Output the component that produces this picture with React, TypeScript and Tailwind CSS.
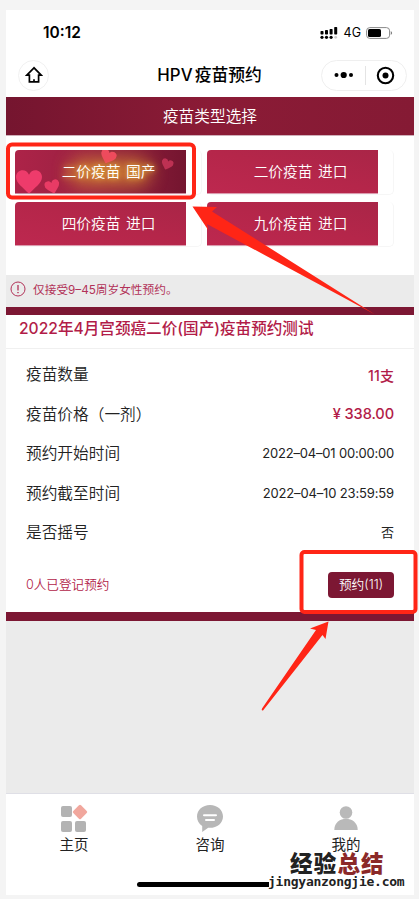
const cjk = "font-['Inter','Noto_Sans_CJK_SC',sans-serif]";

function StatusBar() {
  return (
    <div className="flex h-[45px] items-center justify-between pl-[37px] pr-[21px]">
      <span className="text-[15.5px] font-semibold leading-none tracking-[0px] text-black">10:12</span>
      <div className="flex items-center">
        <svg width="18" height="12" viewBox="0 0 18 12" fill="black">
          <rect x="0.5" y="4" width="3" height="3.5" rx="0.7" />
          <rect x="5" y="3" width="3" height="4.5" rx="0.7" />
          <rect x="9.6" y="2" width="3" height="5.5" rx="0.7" />
          <rect x="14.2" y="0" width="3" height="7.5" rx="0.7" />
          <circle cx="2" cy="10.3" r="1.6" />
          <circle cx="6.5" cy="10.3" r="1.6" />
          <circle cx="11.1" cy="10.3" r="1.6" />
          <circle cx="15.7" cy="10.3" r="1.4" fill="#ccc" />
        </svg>
        <span className="ml-[6px] mr-[5px] pt-[2px] text-[12.5px] leading-none tracking-[0px]">4G</span>
        <svg width="27" height="12" viewBox="0 0 27 12">
          <rect x="0.6" y="0.6" width="23" height="10.8" rx="3.2" fill="none" stroke="#888" />
          <rect x="2" y="2" width="13" height="8" rx="1.6" />
          <path d="M24.8 4v4q1.3-.8 1.3-2t-1.3-2" fill="#777" />
        </svg>
      </div>
    </div>
  );
}

function NavBar() {
  return (
    <div className="flex h-[42px] items-center justify-between pl-[12px] pr-[7px] pb-[2px]">
      <div className="flex h-[31px] w-[31px] items-center justify-center rounded-full border border-[#f1f1f1]">
        <svg width="18" height="18" viewBox="0 0 18 18" fill="none" stroke="black" strokeWidth="1.7" strokeLinejoin="miter">
          <path d="M9 1.8 1.8 9.2h2.6v6.6h9.2V9.2h2.6z" />
          <path d="M9 13.2v2.6" />
        </svg>
      </div>
      <h1 className="ml-[49px] whitespace-nowrap pt-[1px] text-[16.8px] font-medium leading-none text-black">
        <span className="mr-[2px] tracking-[0.1px]">HPV</span>疫苗预约
      </h1>
      <div className="flex h-[31px] w-[86px] items-center rounded-full border border-[#efefef]">
        <svg className="w-[43px]" height="10" viewBox="0 0 43 10">
          <circle cx="14.5" cy="5" r="2" />
          <circle cx="21.7" cy="5" r="3.1" />
          <circle cx="29" cy="5" r="2" />
        </svg>
        <div className="h-[19px] w-px bg-[#e4e4e4]" />
        <svg className="ml-[10px]" width="19" height="19" viewBox="0 0 19 19">
          <circle cx="9.5" cy="9.5" r="7.7" fill="none" stroke="black" strokeWidth="2.1" />
          <circle cx="9.5" cy="9.5" r="3" />
        </svg>
      </div>
    </div>
  );
}

function Heart({ className }: { className: string }) {
  return (
    <svg className={className} viewBox="0 0 24 22" preserveAspectRatio="none">
      <path d="M12 22C8 17 0 12.5 0 6.4 0 0 9-2.5 12 4.4 15-2.5 24 0 24 6.4 24 12.5 16 17 12 22z" fill="currentColor" />
    </svg>
  );
}

function VaccineButton({ name, origin, selected = false }: { name: string; origin: string; selected?: boolean }) {
  return (
    <div className="h-[45px] rounded-[5px] border-b border-r border-[#f6f6f6]">
      <button
        className={
          selected
            ? "relative block h-[44px] w-[171px] overflow-hidden rounded-tl-[4px] border-b border-[#c88ca0] bg-linear-to-r from-[#ad2348] via-[#982141] to-[#74152f] text-white"
            : "block h-[44px] w-[171px] rounded-tl-[4px] border-b border-[#dc9bae] bg-linear-to-tr from-[#bd284f] via-[#b5264a] to-[#a92547] text-white"
        }
      >
        {selected && (
          <>
            <span className="absolute left-[54px] top-[8px] h-[28px] w-[82px] rounded-full bg-[#d48736] opacity-75 blur-[9px]" />
            <Heart className="absolute left-[1px] top-[20px] h-[24px] w-[26px] text-[#ee3b6b]" />
            <Heart className="absolute left-[30px] top-[30px] h-[14px] w-[15px] -rotate-15 text-[#e83b65]" />
            <Heart className="absolute left-[85px] top-[0px] h-[14px] w-[16px] rotate-20 text-[#ee4b5d]" />
            <Heart className="absolute left-[146px] top-[9px] h-[11px] w-[12px] rotate-20 text-[#bd3153]" />
          </>
        )}
        <span
          className={
            selected
              ? "relative ml-[16px] whitespace-pre text-[14.7px] font-[350] leading-[42px] [text-shadow:0_0_5px_#e7b63c,0_0_9px_#d99635]"
              : "ml-[16px] whitespace-pre text-[14.7px] font-[350] leading-[42px]"
          }
        >
          {name}
          <span className="ml-[5.5px]">{origin}</span>
        </span>
      </button>
    </div>
  );
}

const rows = [
  { label: "疫苗数量", value: "11支", style: "pt-[1px] text-[14px] font-medium text-[#b21c48] tracking-[0.1px]" },
  { label: "疫苗价格（一剂）", value: "¥ 338.00", style: "text-[14.6px] font-medium text-[#b21c48] tracking-[-0.1px]" },
  { label: "预约开始时间", value: "2022–04–01 00:00:00", style: "text-[13px] text-[#222] tracking-[-0.2px]" },
  { label: "预约截至时间", value: "2022–04–10 23:59:59", style: "text-[13px] text-[#222] tracking-[-0.15px]" },
  { label: "是否摇号", value: "否", style: "text-[13px] text-[#222]" },
];

function Details() {
  return (
    <section className="h-[314px] border-y-[8px] border-b-[9px] border-[#7c1733] bg-white">
      <h2 className="h-[34px] whitespace-nowrap border-b border-[#f0f0f0] pl-[13px] text-[15.6px] font-medium leading-[27px] text-[#b21c48]">
        2022年4月宫颈癌二价(国产)疫苗预约测试
      </h2>
      <div className="pl-[20px] pr-[20px] pt-[6.5px]">
        {rows.map((row) => (
          <div key={row.label} className="flex h-[39.4px] items-center justify-between whitespace-nowrap">
            <span className="text-[15.7px] font-[350] leading-none text-[#222]">{row.label}</span>
            <span className={row.style}>{row.value}</span>
          </div>
        ))}
      </div>
      <div className="flex h-[66px] items-center justify-between pl-[20px] pr-[20px]">
        <span className="text-[12.6px] font-[350] leading-none text-[#b21c48]">0人已登记预约</span>
        <button className="h-[26px] w-[66px] whitespace-nowrap rounded-[4px] bg-[#7c1733] text-[12.7px] font-[350] leading-none text-white">预约(11)</button>
      </div>
    </section>
  );
}

function TabBar() {
  return (
    <nav className="grid h-[102px] grid-cols-3 border-t border-[#dfdfe6] bg-white pt-[10px] text-[14.5px] leading-none text-[#222]">
      <div className="flex flex-col items-center gap-[5px]">
        <svg width="28" height="29" viewBox="0 0 28 29">
          <g fill="#b3b3b3">
            <rect x="1" y="2" width="11" height="11" rx="2" />
            <rect x="1" y="17" width="11" height="11" rx="2" />
            <rect x="15" y="17" width="11" height="11" rx="2" />
          </g>
          <rect x="14.5" y="2.5" width="11" height="11" rx="1.5" transform="rotate(45 20 8)" fill="#f1a79d" />
        </svg>
        主页
      </div>
      <div className="flex flex-col items-center gap-[5px]">
        <svg width="28" height="29" viewBox="0 0 28 29">
          <path d="M14 1C6.5 1 1 6 1 12.5c0 4 2 7.4 5.2 9.5v6l6-4.2C20.5 24.5 27 19.5 27 12.5 27 6 21.5 1 14 1z" fill="#b7b7b7" />
          <path d="M8 11.2h12M10 16h8" stroke="white" strokeWidth="2" strokeLinecap="round" />
        </svg>
        咨询
      </div>
      <div className="flex flex-col items-center gap-[5px]">
        <svg width="28" height="29" viewBox="0 0 28 29" fill="#b9b9b9">
          <circle cx="14" cy="8.5" r="6.3" />
          <path d="M2.3 26C2.3 11 25.7 11 25.7 26z" />
        </svg>
        我的
      </div>
    </nav>
  );
}

export default function App() {
  return (
    <div className={`relative h-[899px] w-[419px] overflow-hidden bg-[#f4f4f4] pl-[6px] pt-[10px] ${cjk}`}>
      <main className="flex h-[885px] w-[408px] flex-col bg-white">
        <StatusBar />
        <NavBar />
        <div className="h-[39px] border-b border-[#cfafb9] bg-linear-to-r from-[#75152f] via-[#8b1b36] to-[#851a34] text-center text-[15.7px] font-[350] leading-[39px] text-white">疫苗类型选择</div>
        <div className="grid h-[139px] grid-cols-2 content-start gap-x-[5px] gap-y-[7px] pl-[9px] pr-[20px] pt-[14px]">
          <VaccineButton name="二价疫苗" origin="国产" selected />
          <VaccineButton name="二价疫苗" origin="进口" />
          <VaccineButton name="四价疫苗" origin="进口" />
          <VaccineButton name="九价疫苗" origin="进口" />
        </div>
        <div className="flex h-[32px] items-center bg-[#ebebeb] pl-[4px] text-[11.7px] leading-none text-[#b23258]">
          <svg className="mb-[4px] mr-[7px]" width="16" height="16" viewBox="0 0 16 16" fill="none" stroke="currentColor">
            <circle cx="8" cy="8" r="7" />
            <path d="M8 4v5.5" strokeWidth="1.3" />
            <circle cx="8" cy="11.7" r=".4" />
          </svg>
          仅接受9–45周岁女性预约。
        </div>
        <Details />
        <div className="flex-1 bg-[#ebebeb]" />
        <TabBar />
      </main>
      <div className="absolute left-[137px] top-[882px] h-[5px] w-[132px] rounded-l-full bg-black" />
      <div className="absolute left-[268px] top-[851px] whitespace-nowrap leading-none">
        <div className="ml-[22px] h-[24px] text-[22.5px] font-black leading-[25px] tracking-[1.2px] text-[#222] [text-shadow:0_0_1px_white]">
          经验<span className="text-[#8b2928]">总结</span>
        </div>
        <div className="font-['DejaVu_Sans_Mono',monospace] text-[13px] font-bold leading-[14px] tracking-[-0.25px] text-[#222]">jingyanzongjie.com</div>
      </div>
      <svg className="absolute left-0 top-0" width="419" height="899" viewBox="0 0 419 899">
        <g fill="none" stroke="#ff2516" strokeWidth="4">
          <rect x="8" y="144.5" width="186" height="53" rx="4" />
          <rect x="301.5" y="552" width="114" height="60" rx="3" />
        </g>
        <g fill="#ff2516">
          <path d="M192.500 206.500 217 207 212 211.500 375 314.500 207 224 208.500 230.500z" />
          <path d="M328.500 621.500 325.500 639 322.500 635 263 710.500Q261 711 262 708.500L316 630 310 628.500z" />
        </g>
      </svg>
    </div>
  );
}
